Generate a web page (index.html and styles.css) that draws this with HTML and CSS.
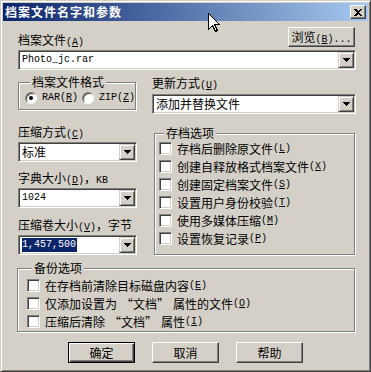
FILE: index.html
```html
<!DOCTYPE html>
<html lang="zh-CN">
  <head>
    <meta charset="UTF-8" />
    <title>档案文件名字和参数</title>
    <link rel="stylesheet" href="styles.css">
  </head>
  <body>
    <div class="window">
      <div class="titlebar">
        <span class="title">档案文件名字和参数</span>
        <span class="close">
          <svg width="8" height="7" viewBox="0 0 8 7"><path d="M0 0h2l2 2 2-2h2L5 3.5 8 7H6L4 5 2 7H0l3-3.5z" /></svg>
        </span>
      </div>

      <div class="content">
        <div class="file-head">
          <span class="label">档案文件<span class="k">(<u>A</u>)</span></span>
          <button class="btn browse">浏览<span class="k">(<u>B</u>)...</span></button>
        </div>
        <div class="combo file-combo">
          <span class="val k">Photo_jc.rar</span>
          <span class="drop"><svg width="7" height="4"><path d="M0 0h7v1H0zM1 1h5v1H1zM2 2h3v1H2zM3 3h1v1H3z" /></svg></span>
        </div>

        <div class="row2">
          <div class="group format">
            <span class="legend">档案文件格式</span>
            <div class="radios">
              <span class="radio on"></span><span class="k">RAR(<u>R</u>)</span>
              <span class="radio"></span><span class="k">ZIP(<u>Z</u>)</span>
            </div>
          </div>
          <div class="col-update">
            <div class="label">更新方式<span class="k">(<u>U</u>)</span></div>
            <div class="combo">
              <span class="val">添加并替换文件</span>
              <span class="drop"><svg width="7" height="4"><path d="M0 0h7v1H0zM1 1h5v1H1zM2 2h3v1H2zM3 3h1v1H3z" /></svg></span>
            </div>
          </div>
        </div>

        <div class="row3">
          <div class="left-col">
            <div class="label">压缩方式<span class="k">(<u>C</u>)</span></div>
            <div class="combo">
              <span class="val">标准</span>
              <span class="drop"><svg width="7" height="4"><path d="M0 0h7v1H0zM1 1h5v1H1zM2 2h3v1H2zM3 3h1v1H3z" /></svg></span>
            </div>
            <div class="label gap">字典大小<span class="k">(<u>D</u>)</span>，<span class="k">KB</span></div>
            <div class="combo">
              <span class="val k">1024</span>
              <span class="drop"><svg width="7" height="4"><path d="M0 0h7v1H0zM1 1h5v1H1zM2 2h3v1H2zM3 3h1v1H3z" /></svg></span>
            </div>
            <div class="label gap2">压缩卷大小<span class="k">(<u>V</u>)</span>，字节</div>
            <div class="combo">
              <span class="val k"><span class="sel">1,457,500</span></span>
              <span class="drop"><svg width="7" height="4"><path d="M0 0h7v1H0zM1 1h5v1H1zM2 2h3v1H2zM3 3h1v1H3z" /></svg></span>
            </div>
          </div>

          <div class="group options">
            <span class="legend">存档选项</span>
            <div class="checklist">
              <div class="item"><span class="check"></span>存档后删除原文件<span class="k">(<u>L</u>)</span></div>
              <div class="item"><span class="check"></span>创建自释放格式档案文件<span class="k">(<u>X</u>)</span></div>
              <div class="item"><span class="check"></span>创建固定档案文件<span class="k">(<u>S</u>)</span></div>
              <div class="item"><span class="check"></span>设置用户身份校验<span class="k">(<u>T</u>)</span></div>
              <div class="item"><span class="check"></span>使用多媒体压缩<span class="k">(<u>M</u>)</span></div>
              <div class="item"><span class="check"></span>设置恢复记录<span class="k">(<u>P</u>)</span></div>
            </div>
          </div>
        </div>

        <div class="group backup">
          <span class="legend">备份选项</span>
          <div class="checklist">
            <div class="item"><span class="check"></span>在存档前清除目标磁盘内容<span class="k">(<u>E</u>)</span></div>
            <div class="item"><span class="check"></span>仅添加设置为<span class="q">“文档”</span>属性的文件<span class="k">(<u>O</u>)</span></div>
            <div class="item"><span class="check"></span>压缩后清除<span class="q">“文档”</span>属性<span class="k">(<u>I</u>)</span></div>
          </div>
        </div>

        <div class="buttons">
          <button class="btn default">确定</button>
          <button class="btn">取消</button>
          <button class="btn">帮助</button>
        </div>
      </div>

      <svg class="cursor" width="12" height="19" viewBox="0 0 12 19">
        <path d="M0.5 0.5V16.5L4.5 12.5L7.5 18.5L9.5 17.5L6.5 11.5H11.5Z" />
      </svg>
    </div>
  </body>
</html>
```

FILE: styles.css
```css
* {
  box-sizing: border-box;
}

body {
  margin: 0;
  background-color: #d4d0c8;
  color: #000;
  font: 12px/14px "Noto Sans CJK SC", sans-serif;
}

.window {
  position: relative;
  width: 371px;
  height: 372px;
  padding: 2px;
  background-color: #d4d0c8;
  border: 1px solid;
  border-color: #d4d0c8 #404040 #404040 #d4d0c8;
  box-shadow: inset 1px 1px #fff, inset -1px -1px #808080;
}

/* barre de titre */
.titlebar {
  display: flex;
  align-items: center;
  justify-content: space-between;
  height: 18px;
  padding: 0 2px;
  background: linear-gradient(to right, #0a246a, #a6caf0);
}

.title {
  color: #fff;
  font-weight: bold;
  font-size: 12px;
  letter-spacing: 1px;
}

.close {
  display: flex;
  align-items: center;
  justify-content: center;
  width: 16px;
  height: 14px;
  background-color: #d4d0c8;
  border: 1px solid;
  border-color: #fff #404040 #404040 #fff;
  box-shadow: inset -1px -1px #808080;
}

.close svg {
  display: block;
  shape-rendering: crispEdges;
}

.content {
  padding: 6px 12px 0 15px;
}

/* texte latin : demi-largeur comme SimSun */
.k {
  font: 10px/8px "Liberation Mono", monospace;
}

.q {
  margin: 0 4px;
}

.label {
  height: 14px;
  line-height: 14px;
  white-space: nowrap;
}

.file-head {
  display: flex;
  justify-content: space-between;
  align-items: flex-end;
}

.btn {
  width: 67px;
  height: 21px;
  padding: 0;
  font: 12px/14px "Noto Sans CJK SC", sans-serif;
  color: #000;
  background-color: #d4d0c8;
  border: 1px solid;
  border-color: #fff #404040 #404040 #fff;
  box-shadow: inset -1px -1px #808080;
}

.btn.default {
  border: 1px solid #000;
  box-shadow: inset 1px 1px #fff, inset -1px -1px #404040, inset -2px -2px #808080;
}

.browse {
  height: 20px;
  margin-right: 1px;
}

/* liste déroulante */
.combo {
  display: flex;
  align-items: center;
  height: 20px;
  padding: 1px;
  background-color: #fff;
  border: 1px solid;
  border-color: #808080 #fff #fff #808080;
  box-shadow: inset 1px 1px #404040, inset -1px -1px #d4d0c8;
}

.file-combo {
  margin-top: 3px;
}

.val {
  flex: 1;
  padding-left: 2px;
  line-height: 14px;
  white-space: nowrap;
}

.sel {
  display: inline-block;
  padding: 0 1px 0 0;
  background-color: #0a246a;
  color: #fff;
}

.drop {
  display: flex;
  align-items: center;
  justify-content: center;
  width: 16px;
  height: 16px;
  background-color: #d4d0c8;
  border: 1px solid;
  border-color: #d4d0c8 #404040 #404040 #d4d0c8;
  box-shadow: inset 1px 1px #fff, inset -1px -1px #808080;
}

.drop svg {
  display: block;
  shape-rendering: crispEdges;
}

/* cadres */
.group {
  border: 1px solid #808080;
  box-shadow: inset 1px 1px #fff, 1px 1px #fff;
}

.legend {
  display: table;
  height: 14px;
  margin: -8px 0 0 5px;
  padding: 0 2px;
  line-height: 14px;
  background-color: #d4d0c8;
  white-space: nowrap;
}

.row2 {
  display: flex;
  margin-top: 6px;
}

.format {
  width: 118px;
  margin-top: 6px;
  align-self: flex-start;
  padding: 0 0 5px 6px;
}

.radios {
  display: flex;
  align-items: center;
  margin-top: 3px;
  height: 12px;
}

.radios .k {
  line-height: 12px;
}

.radio {
  width: 12px;
  height: 12px;
  margin-right: 5px;
  border-radius: 50%;
  background-color: #fff;
  border: 1px solid;
  border-color: #808080 #fff #fff #808080;
  box-shadow: inset 1px 1px #404040;
}

.radio.on::after {
  content: "";
  display: block;
  width: 4px;
  height: 4px;
  margin: 3px;
  border-radius: 50%;
  background-color: #000;
}

.radios .k + .radio {
  margin-left: 4px;
}

.col-update {
  flex: 1;
  margin-left: 16px;
}

.col-update .combo {
  margin-top: 4px;
}

.row3 {
  display: flex;
  margin-top: 11px;
}

.left-col {
  width: 119px;
}

.left-col .combo {
  margin-top: 3px;
}

.left-col .gap {
  margin-top: 9px;
}

.left-col .gap2 {
  margin-top: 10px;
}

.options {
  flex: 1;
  margin: 8px 1px 0 17px;
  padding-left: 4px;
}

.checklist {
  display: flex;
  flex-direction: column;
  gap: 5px;
}

.options .checklist {
  margin-top: 2px;
}

.item {
  display: flex;
  align-items: center;
  height: 13px;
  white-space: nowrap;
}

.item .k {
  line-height: 13px;
}

.check {
  flex: none;
  width: 13px;
  height: 13px;
  margin-right: 5px;
  background-color: #fff;
  border: 1px solid;
  border-color: #808080 #fff #fff #808080;
  box-shadow: inset 1px 1px #404040, inset -1px -1px #d4d0c8;
}

.backup {
  margin: 13px 1px 0 -1px;
  padding: 0 0 3px 9px;
}

.backup .checklist {
  margin-top: 4px;
}

.buttons {
  display: flex;
  gap: 17px;
  margin-top: 10px;
  padding-left: 50px;
}

/* pointeur de souris, posé par-dessus */
.cursor {
  position: absolute;
  left: 207px;
  top: 12px;
  fill: #fff;
  stroke: #000;
  stroke-width: 1;
  shape-rendering: crispEdges;
}
```
